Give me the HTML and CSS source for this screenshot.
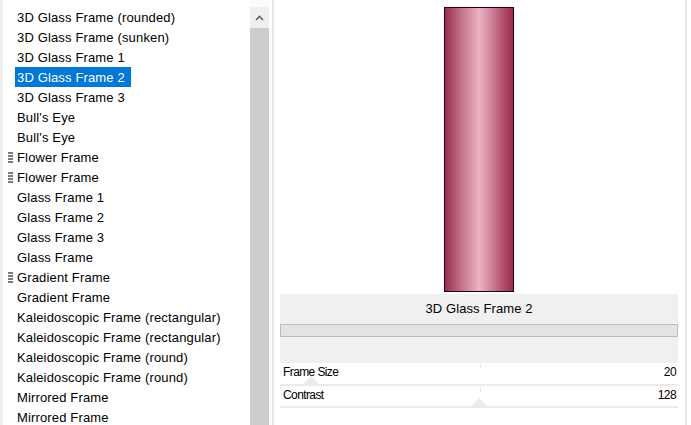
FILE: index.html
```html
<!DOCTYPE html>
<html>
<head>
<meta charset="utf-8">
<link rel="stylesheet" href="styles.css">
</head>
<body>
<div class="app">
  <div class="edge-left"></div>
  <ul class="list">
    <li><span class="slot"></span><span class="txt">3D Glass Frame (rounded)</span></li>
    <li><span class="slot"></span><span class="txt">3D Glass Frame (sunken)</span></li>
    <li><span class="slot"></span><span class="txt">3D Glass Frame 1</span></li>
    <li class="sel"><span class="slot"></span><span class="txt">3D Glass Frame 2</span></li>
    <li><span class="slot"></span><span class="txt">3D Glass Frame 3</span></li>
    <li><span class="slot"></span><span class="txt">Bull's Eye</span></li>
    <li><span class="slot"></span><span class="txt">Bull's Eye</span></li>
    <li><span class="slot"><svg class="grip" width="5" height="11" viewBox="0 0 5 11"><rect x="0" y="0" width="5" height="2" fill="#7a7a7a"/><rect x="0" y="3" width="5" height="2" fill="#7a7a7a"/><rect x="0" y="6" width="5" height="2" fill="#7a7a7a"/><rect x="0" y="9" width="5" height="2" fill="#7a7a7a"/></svg></span><span class="txt">Flower Frame</span></li>
    <li><span class="slot"><svg class="grip" width="5" height="11" viewBox="0 0 5 11"><rect x="0" y="0" width="5" height="2" fill="#7a7a7a"/><rect x="0" y="3" width="5" height="2" fill="#7a7a7a"/><rect x="0" y="6" width="5" height="2" fill="#7a7a7a"/><rect x="0" y="9" width="5" height="2" fill="#7a7a7a"/></svg></span><span class="txt">Flower Frame</span></li>
    <li><span class="slot"></span><span class="txt">Glass Frame 1</span></li>
    <li><span class="slot"></span><span class="txt">Glass Frame 2</span></li>
    <li><span class="slot"></span><span class="txt">Glass Frame 3</span></li>
    <li><span class="slot"></span><span class="txt">Glass Frame</span></li>
    <li><span class="slot"><svg class="grip" width="5" height="11" viewBox="0 0 5 11"><rect x="0" y="0" width="5" height="2" fill="#7a7a7a"/><rect x="0" y="3" width="5" height="2" fill="#7a7a7a"/><rect x="0" y="6" width="5" height="2" fill="#7a7a7a"/><rect x="0" y="9" width="5" height="2" fill="#7a7a7a"/></svg></span><span class="txt">Gradient Frame</span></li>
    <li><span class="slot"></span><span class="txt">Gradient Frame</span></li>
    <li><span class="slot"></span><span class="txt">Kaleidoscopic Frame (rectangular)</span></li>
    <li><span class="slot"></span><span class="txt">Kaleidoscopic Frame (rectangular)</span></li>
    <li><span class="slot"></span><span class="txt">Kaleidoscopic Frame (round)</span></li>
    <li><span class="slot"></span><span class="txt">Kaleidoscopic Frame (round)</span></li>
    <li><span class="slot"></span><span class="txt">Mirrored Frame</span></li>
    <li><span class="slot"></span><span class="txt">Mirrored Frame</span></li>
  </ul>
  <div class="scrollbar">
    <div class="sb-top"></div>
    <div class="sb-btn"><svg width="9" height="6" viewBox="0 0 9 6"><path d="M1 5 L4.5 1.5 L8 5" fill="none" stroke="#606060" stroke-width="1.6"/></svg></div>
    <div class="sb-thumb"></div>
  </div>
  <div class="gutter"></div>
  <div class="divider"></div>
  <div class="panel">
    <div class="preview">
      <div class="bar"></div>
    </div>
    <div class="info">
      <div class="title">3D Glass Frame 2</div>
      <div class="field"></div>
    </div>
    <div class="param">
      <span class="pname">Frame Size</span>
      <span class="pval">20</span>
      <span class="tick"></span>
      <span class="knob" style="left: 23px"></span>
    </div>
    <div class="param">
      <span class="pname">Contrast</span>
      <span class="pval">128</span>
      <span class="tick"></span>
      <span class="knob" style="left: 191px"></span>
    </div>
  </div>
  <div class="divider-r"></div>
  <div class="edge-right"></div>
</div>
</body>
</html>
```

FILE: styles.css
```css
html, body {
  margin: 0;
  padding: 0;
  background: #ffffff;
  overflow: hidden;
}

.app {
  display: flex;
  width: 691px;
  height: 425px;
  font-family: "Liberation Sans", Arial, sans-serif;
  font-size: 13px;
  color: #000;
  overflow: hidden;
}

.edge-left {
  width: 3px;
  background: #f0f0f0;
  flex: none;
}

.list {
  list-style: none;
  margin: 0;
  padding: 7px 0 0 5px;
  width: 242px;
  flex: none;
  background: #fff;
}

.list li {
  display: flex;
  align-items: center;
  height: 20px;
  white-space: nowrap;
}

.slot {
  width: 7px;
  flex: none;
  display: flex;
  align-items: center;
}

.txt {
  padding: 1px 6px 0 2px;
  line-height: 19px;
  letter-spacing: 0.15px;
}

.sel .txt {
  background: #0078d7;
  color: #fff;
}

.scrollbar {
  width: 19px;
  flex: none;
  display: flex;
  flex-direction: column;
  background: #fff;
}

.sb-top {
  height: 7px;
  background: #fbfbfb;
}

.sb-btn {
  height: 21px;
  background: #f0f0f0;
  display: flex;
  align-items: center;
  justify-content: center;
}

.sb-thumb {
  flex: 1;
  background: #cdcdcd;
}

.gutter {
  width: 3px;
  flex: none;
  background: #fff;
}

.divider {
  width: 2px;
  flex: none;
  background: #e6e6e6;
}

.panel {
  width: 411px;
  flex: none;
  padding: 0 7px 0 6px;
  box-sizing: border-box;
  display: flex;
  flex-direction: column;
  background: #fff;
}

.preview {
  height: 294px;
  padding-top: 7px;
  box-sizing: border-box;
  display: flex;
  justify-content: center;
}

.bar {
  width: 70px;
  height: 285px;
  box-sizing: border-box;
  border: 1px solid #2a0008;
  background: linear-gradient(to right,
    #9a2c4c 0%,
    #b2566f 14%,
    #cd8198 30%,
    #e2a3b3 44%,
    #ecb2c0 50%,
    #dc9bad 60%,
    #c67690 72%,
    #b04e6a 86%,
    #9a2c4c 100%);
}

.info {
  height: 69px;
  background: #f0f0f0;
  display: flex;
  flex-direction: column;
}

.title {
  height: 30px;
  line-height: 29px;
  text-align: center;
  letter-spacing: 0.1px;
}

.field {
  height: 13px;
  box-sizing: border-box;
  border: 1px solid #bcbcbc;
  background: #e3e3e3;
}

.param {
  position: relative;
  display: flex;
  justify-content: space-between;
  height: 21px;
  padding: 0 2px 0 3px;
  border-bottom: 2px solid #ebebeb;
  font-size: 12px;
  line-height: 19px;
  letter-spacing: -0.6px;
}

.param + .param {
  height: 20px;
}

.pname, .pval {
  position: relative;
  z-index: 1;
}

.tick {
  position: absolute;
  left: 200px;
  top: 1px;
  width: 1px;
  height: 5px;
  background: #e8e8e8;
}

.knob {
  position: absolute;
  bottom: 0;
  width: 0;
  height: 0;
  border-left: 8px solid transparent;
  border-right: 8px solid transparent;
  border-bottom: 8px solid #ececec;
}

.divider-r {
  width: 2px;
  flex: none;
  background: #e6e6e6;
}

.edge-right {
  flex: 1;
  background: #fff;
}
```
